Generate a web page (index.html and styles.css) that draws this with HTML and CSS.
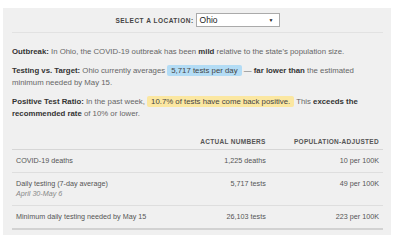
FILE: index.html
```html
<!DOCTYPE html>
<html lang="en">
<head>
  <meta charset="UTF-8">
  <title>COVID-19 Testing</title>
  <link rel="stylesheet" href="styles.css">
</head>
<body>
<div class="panel">
  <div class="picker">
    <span class="picker-label">SELECT A LOCATION:</span>
    <span class="select">Ohio<span class="caret">&#9660;</span></span>
  </div>

  <p class="note"><b>Outbreak:</b> In Ohio, the COVID-19 outbreak has been <b>mild</b> relative to the state's population size.</p>
  <p class="note"><b>Testing vs. Target:</b> Ohio currently averages <span class="hl blue">5,717 tests per day</span> &mdash; <b>far lower than</b> the estimated minimum needed by May 15.</p>
  <p class="note"><b>Positive Test Ratio:</b> In the past week, <span class="hl yellow">10.7% of tests have come back positive.</span> This <b>exceeds the recommended rate</b> of 10% or lower.</p>

  <table class="stats">
    <thead>
      <tr><th></th><th>ACTUAL NUMBERS</th><th>POPULATION-ADJUSTED</th></tr>
    </thead>
    <tbody>
      <tr><td>COVID-19 deaths</td><td>1,225 deaths</td><td>10 per 100K</td></tr>
      <tr><td>Daily testing (7-day average)<br><i>April 30-May 6</i></td><td>5,717 tests</td><td>49 per 100K</td></tr>
      <tr><td>Minimum daily testing needed by May 15</td><td>26,103 tests</td><td>223 per 100K</td></tr>
    </tbody>
  </table>
</div>
</body>
</html>
```

FILE: styles.css
```css
* { margin: 0; padding: 0; box-sizing: border-box; }
body {
  font-family: 'Liberation Sans', Arial, sans-serif;
  background: #fff;
  color: #555;
  padding: 8px 9px 0 3px;
}

.panel {
  background: #f0f0f0;
  padding: 5px 8px 8px 9px;
  height: 227px;
}

.picker {
  display: flex;
  justify-content: center;
  align-items: center;
  gap: 2px;
  padding: 0 0 5px;
  border-bottom: 1px solid #e2e2e2;
  margin-bottom: 13px;
}

.picker-label {
  font-size: 6.5px;
  font-weight: bold;
  letter-spacing: 0.5px;
  color: #444;
}

.select {
  display: flex;
  justify-content: space-between;
  align-items: center;
  width: 84px;
  height: 14px;
  padding: 0 5px 0 3px;
  background: #fff;
  border: 1px solid #aaa;
  font-size: 8.5px;
  color: #222;
}

.caret { font-size: 5px; color: #222; }

.note {
  font-size: 7.8px;
  line-height: 12.5px;
  margin-bottom: 6px;
  color: #666;
}
.note b { color: #333; }

.hl {
  padding: 1px 4px;
  border-radius: 2px;
  color: #444;
}
.blue { background: #b3dcf5; }
.yellow { background: #fbe7a1; }

.stats {
  width: 100%;
  border-collapse: collapse;
  margin-top: 16px;
  font-size: 7.2px;
  line-height: 10px;
  color: #555;
}
.stats th {
  font-size: 6.5px;
  font-weight: bold;
  letter-spacing: 0.3px;
  text-align: right;
  color: #555;
  padding: 0 4px 2px;
  border-bottom: 1px solid #d6d6d6;
}
.stats td {
  padding: 6px 4px;
  text-align: right;
  vertical-align: top;
  border-bottom: 1px solid #dedede;
}
.stats td:first-child { text-align: left; }
.stats tr:last-child td { border-bottom: 2px solid #d2d2d2; }
.stats i { color: #888; }
```
